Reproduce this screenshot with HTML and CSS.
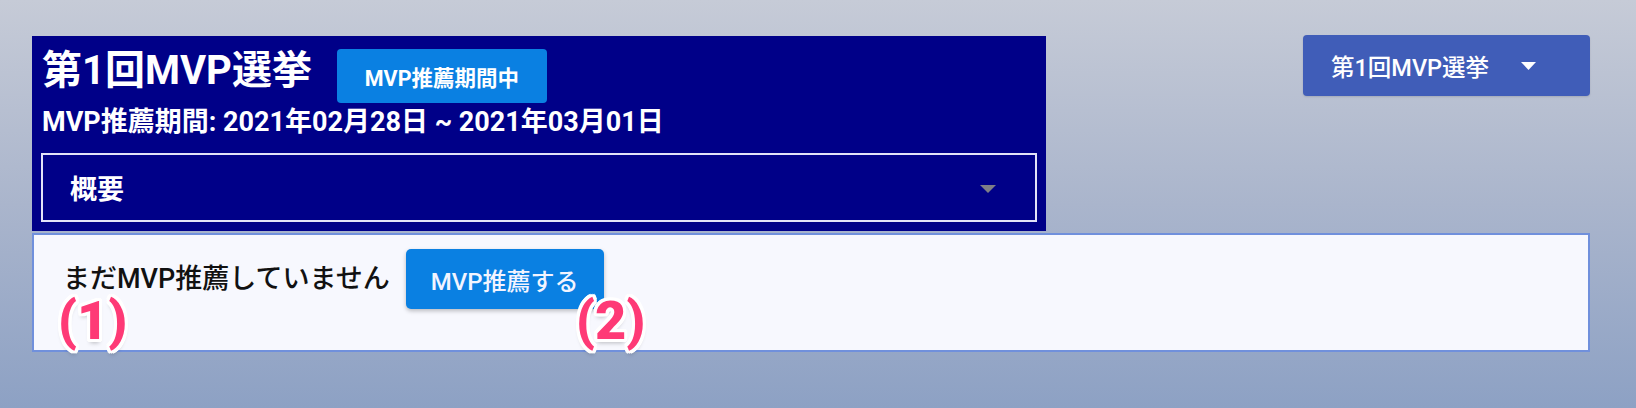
FILE: index.html
```html
<!DOCTYPE html>
<html lang="ja">
<head>
<meta charset="utf-8">
<title>第1回MVP選挙</title>
<link rel="stylesheet" href="styles.css">
</head>
<body>
<div class="page">
  <div class="top-row">
    <section class="panel">
      <div class="title-row">
        <h1 class="title">第1回MVP選挙</h1>
        <span class="badge">MVP推薦期間中</span>
      </div>
      <p class="period">MVP推薦期間: 2021年02月28日 ~ 2021年03月01日</p>
      <div class="summary">
        <span class="summary-label">概要</span>
        <svg class="summary-caret" viewBox="0 0 16 8" width="16" height="8"><path d="M0 0 L16 0 L8 8 Z"/></svg>
      </div>
    </section>
    <button class="select-btn">
      <span class="select-label">第1回MVP選挙</span>
      <svg class="select-caret" viewBox="0 0 15 8" width="15" height="8"><path d="M0 0 L15 0 L7.5 8 Z"/></svg>
    </button>
  </div>
  <section class="card">
    <span class="status">まだMVP推薦していません</span>
    <button class="action-btn">MVP推薦する</button>
    <span class="note note-1">(1)</span>
    <span class="note note-2">(2)</span>
  </section>
</div>
</body>
</html>
```

FILE: styles.css
```css
html, body {
  margin: 0;
  height: 408px;
}
body {
  background: linear-gradient(to bottom, #c6cbd7 0%, #aab5cc 50%, #8da1c4 100%);
  font-family: Roboto, "Noto Sans CJK JP", sans-serif;
  overflow: hidden;
}
.page {
  padding: 35px 46px 0 32px;
  display: flex;
  flex-direction: column;
}
.top-row {
  display: flex;
  justify-content: space-between;
  align-items: flex-start;
}
.panel {
  margin-top: 1px;
  width: 1014px;
  box-sizing: border-box;
  background: #000088;
  padding: 13px 9px 9px 9px;
  color: #fff;
}
.title-row {
  display: flex;
  align-items: center;
  gap: 25px;
  padding-left: 1px;
  height: 54px;
}
.title {
  margin: -10px 0 0 0;
  font-size: 40px;
  font-weight: 700;
  line-height: 1;
}
.badge {
  display: flex;
  align-items: center;
  justify-content: center;
  width: 210px;
  height: 54px;
  background: #0a80e2;
  border-radius: 4px;
  font-size: 21.5px;
  font-weight: 700;
}
.period {
  margin: 4px 0 0 1px;
  font-size: 27px;
  font-weight: 700;
  line-height: 30px;
}
.summary {
  margin-top: 16px;
  height: 69px;
  box-sizing: border-box;
  border: 2px solid #e2e2f8;
  display: flex;
  align-items: center;
  justify-content: space-between;
  padding: 0 39px 0 27px;
}
.summary-label {
  font-size: 27px;
  font-weight: 700;
}
.summary-caret {
  fill: #7e7e86;
  margin-top: 2px;
}
.select-btn {
  width: 287px;
  height: 61px;
  border: 0;
  border-radius: 4px;
  background: #405db8;
  color: #fff;
  font-family: inherit;
  display: flex;
  align-items: center;
  padding: 0 54px 0 28px;
  box-sizing: border-box;
  justify-content: space-between;
  box-shadow: 0 1px 2px rgba(0,0,0,0.12);
}
.select-label {
  font-size: 23.5px;
  font-weight: 500;
}
.select-caret {
  fill: #fff;
}
.card {
  position: relative;
  margin-top: 2px;
  height: 119px;
  box-sizing: border-box;
  border: 2px solid #7090dc;
  background: #f7f8fe;
  display: flex;
  align-items: flex-start;
  padding: 14px 0 0 29px;
  gap: 16px;
}
.status {
  margin-top: 15px;
  font-size: 27px;
  font-weight: 500;
  color: #111;
  line-height: 30px;
}
.action-btn {
  width: 198px;
  height: 60px;
  border: 0;
  border-radius: 5px;
  background: #0a80e2;
  color: #f2f4ff;
  font-family: inherit;
  font-size: 24px;
  font-weight: 500;
  box-shadow: 0 2px 4px rgba(0,0,0,0.25);
}
.note {
  position: absolute;
  top: 62px;
  font-size: 54px;
  font-weight: 900;
  color: #fe3a76;
  line-height: 48px;
  text-shadow:
    3px 0 0 #fff, -3px 0 0 #fff, 0 3px 0 #fff, 0 -3px 0 #fff,
    2px 2px 0 #fff, -2px 2px 0 #fff, 2px -2px 0 #fff, -2px -2px 0 #fff,
    3px 2px 0 #fff, -3px 2px 0 #fff, 3px -2px 0 #fff, -3px -2px 0 #fff,
    2px 3px 0 #fff, -2px 3px 0 #fff, 2px -3px 0 #fff, -2px -3px 0 #fff,
    0 4px 4px rgba(0,0,0,0.25);
}
.note-1 { left: 24px; }
.note-2 { left: 542px; }
```
